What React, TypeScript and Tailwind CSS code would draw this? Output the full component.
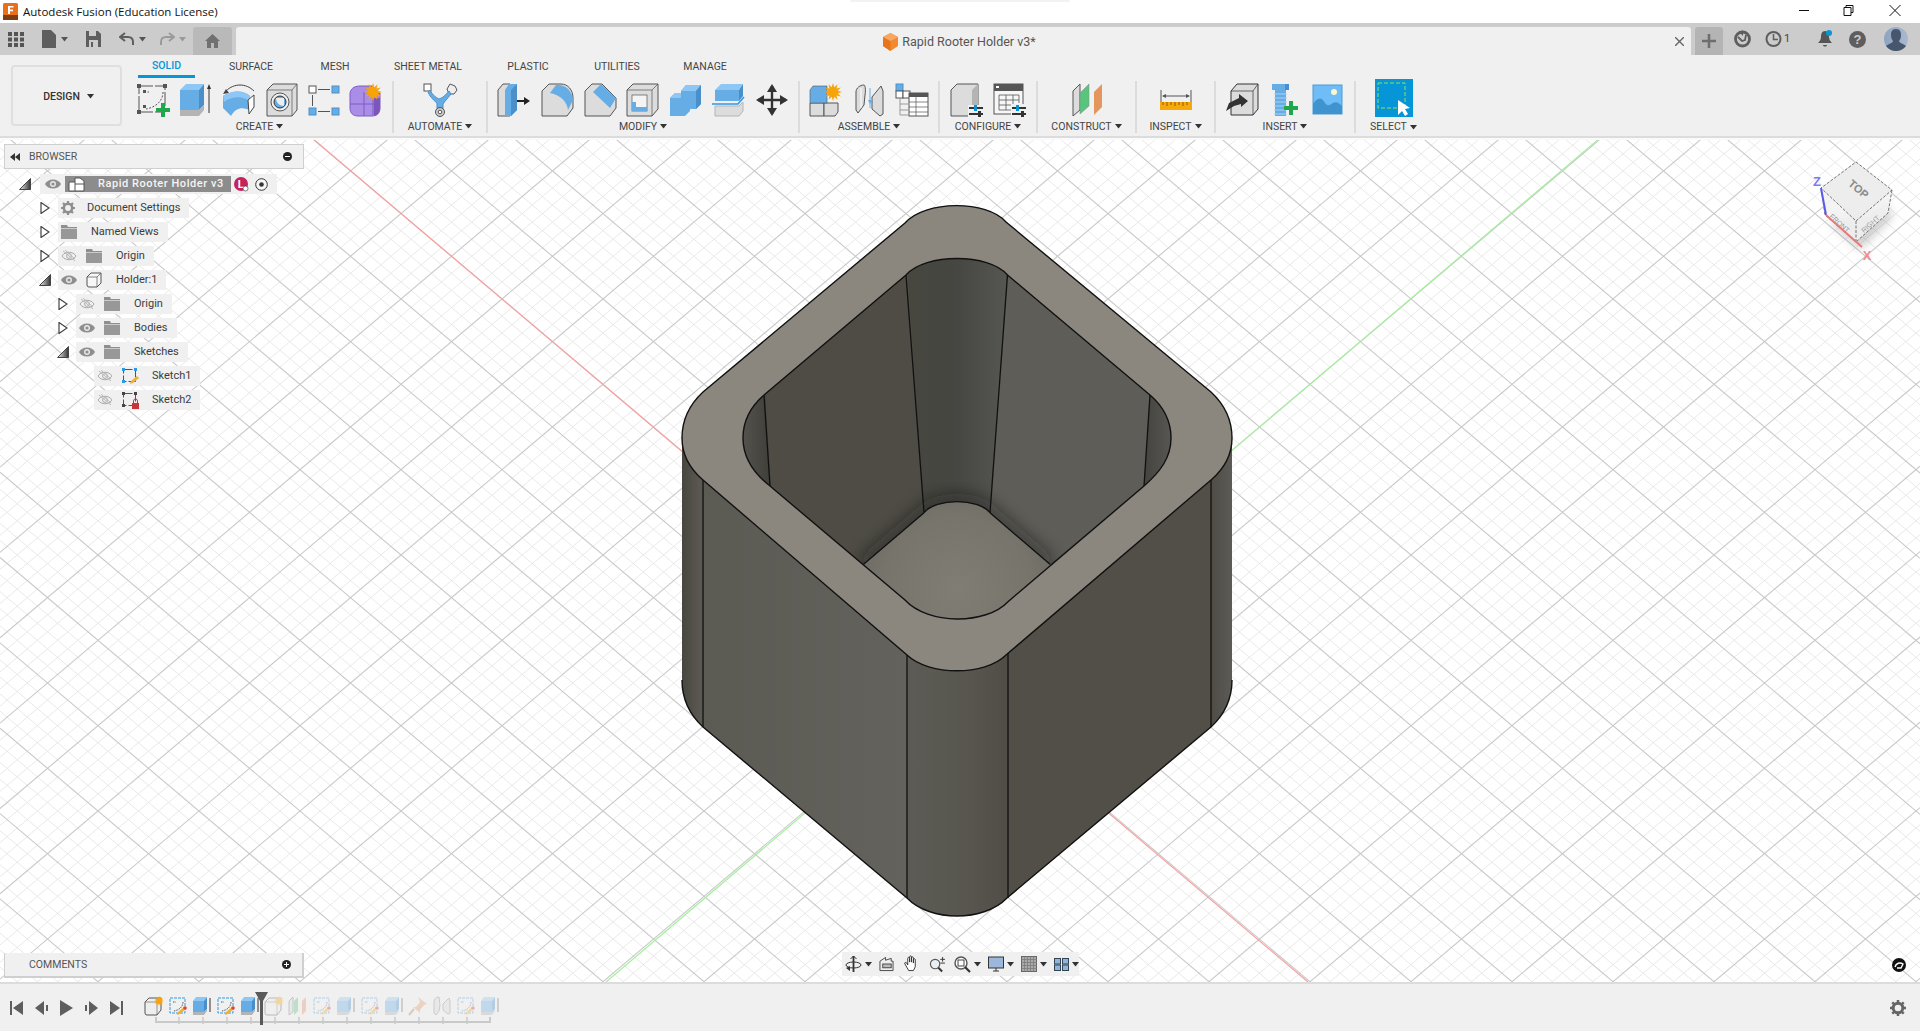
import React from "react";

const B = "#66ade6", BL = "#8ec6f5", BD = "#4a8fc9", G = "#dcdcdc", GD = "#b4b4b4", S = "#555";

const Ico = ({ children, w = 34, h = 34 }: { children: React.ReactNode; w?: number; h?: number }) => (
  <svg width={w} height={h} viewBox={`0 0 ${w} ${h}`} className="block shrink-0">{children}</svg>
);
const Caret = ({ c = "#333" }: { c?: string }) => (
  <svg width="7" height="5" viewBox="0 0 7 5" className="inline-block shrink-0"><polygon points="0,0 7,0 3.5,4.5" fill={c} /></svg>
);
const Plus = ({ x, y }: { x: number; y: number }) => (
  <path d={`M${x - 2} ${y - 7}h4v5h5v4h-5v5h-4v-5h-5v-4h5z`} fill="#1ea84b" />
);
const Star = ({ x, y, r = 7 }: { x: number; y: number; r?: number }) => {
  const pts: string[] = [];
  for (let i = 0; i < 24; i++) {
    const a = (i * Math.PI) / 12;
    const q = i % 2 === 0 ? r : r * 0.55;
    pts.push(`${(x + q * Math.cos(a)).toFixed(1)},${(y + q * Math.sin(a)).toFixed(1)}`);
  }
  return <polygon points={pts.join(" ")} fill="#f7a30a" />;
};

const toolIcons: Record<string, React.ReactNode> = {
  sketch: (
    <Ico>
      <rect x="3" y="3" width="26" height="26" fill="none" stroke={S} strokeDasharray="14 2" />
      <path d="M1 1h4v4H1zM27 1h4v4h-4zM1 27h4v4H1z" fill={S} />
      <path d="M8 9h5M27 9c0 8-6 15-17 17" fill="none" stroke={S} strokeDasharray="2 1.5" />
      <rect x="7" y="7" width="3" height="3" fill={S} /><rect x="7" y="22" width="3" height="3" fill={S} />
      <Plus x={27} y={27} />
    </Ico>
  ),
  extrude: (
    <Ico>
      <polygon points="1,7 20,7 25,1 7,1" fill={BL} />
      <polygon points="1,7 20,7 20,27 1,27" fill={B} />
      <polygon points="20,7 25,1 25,22 20,27" fill={BD} />
      <polygon points="1,27 20,27 25,22 25,27 20,33 1,33" fill={GD} />
      <path d="M30 30V4" stroke="#333" /><polygon points="30,1 32,6 28,6" fill="#333" />
    </Ico>
  ),
  revolve: (
    <Ico>
      <path d="M4 8C12 0 24 0 32 8" fill="none" stroke="#444" /><polygon points="1,11 7,10 4,6" fill="#444" />
      <path d="M1 13C10 7 22 7 28 13L27 27C21 24 14 24 9 33L1 25z" fill={B} />
      <path d="M1 13C10 7 22 7 28 13L27 18C21 13 10 13 2 19z" fill={BL} />
      <path d="M26 17l6-5v12l-5 7z" fill="#fff" stroke="#444" />
    </Ico>
  ),
  hole: (
    <Ico>
      <polygon points="2,7 8,1 32,1 32,27 27,33 2,33" fill={G} stroke={S} />
      <path d="M2 7h25v26M27 7l5-6" fill="none" stroke={S} strokeWidth=".7" />
      <circle cx="15" cy="19" r="9" fill="#eee" stroke={S} />
      <circle cx="15" cy="19" r="6" fill={B} stroke="#333" />
      <path d="M11 15h8v8c-4 0-8-3-8-8z" fill="#eee" />
    </Ico>
  ),
  pattern: (
    <Ico>
      <rect x="2" y="3" width="7" height="7" fill="#fff" stroke={S} />
      <rect x="25" y="3" width="7" height="7" fill={B} stroke={BD} />
      <rect x="2" y="25" width="7" height="7" fill={B} stroke={BD} />
      <rect x="25" y="25" width="7" height="7" fill={B} stroke={BD} />
      <path d="M11 6.5h12M5.5 12v11M11 28.5h12" stroke={S} />
    </Ico>
  ),
  form: (
    <Ico>
      <path d="M1 11C1 6 5 3 11 3h12v7h8v15c0 5-3 8-8 8H9c-5 0-8-3-8-8z" fill="#a98de6" stroke="#7f5cc4" />
      <path d="M1 21h24M15 9v24M24 12v20" stroke="#7f5cc4" fill="none" />
      <path d="M25 15h6v10c0 4-2 7-6 8z" fill="#7d56bb" />
      <Star x={24} y={9} r={9} />
    </Ico>
  ),
  automate: (
    <Ico w={36}>
      <rect x="2" y="1" width="7" height="7" fill="#fff" stroke={S} />
      <polygon points="28,1 33,3 35,7 32,11 27,11 25,6" fill="#eee" stroke={S} />
      <path d="M8 7c3 6 7 8 9 9 3-1 6-3 10-8l2 3c-4 5-6 7-8 10v6h-6v-7C11 17 7 12 6 9z" fill={B} stroke={BD} />
      <circle cx="18" cy="29" r="4.5" fill="#ccc" stroke={S} /><circle cx="18" cy="29" r="1.8" fill="#fff" stroke={S} />
    </Ico>
  ),
  press: (
    <Ico>
      <polygon points="1,7 6,1 13,1 13,33 6,33 1,33" fill={G} stroke={S} />
      <polygon points="8,7 12,1 20,1 20,27 14,33 8,33" fill={B} />
      <polygon points="14,7 20,1 20,27 14,33" fill={BD} />
      <path d="M20 18h9" stroke="#222" strokeWidth="2" /><polygon points="27,14 33,18 27,22" fill="#222" />
    </Ico>
  ),
  fillet: (
    <Ico>
      <path d="M2 8L9 1h12c7 0 12 6 12 14v10l-6 8H2z" fill={G} stroke={S} />
      <path d="M16 2c9-1 16 5 17 15l-5 10c-1-8-7-15-18-17z" fill={B} />
    </Ico>
  ),
  chamfer: (
    <Ico>
      <path d="M2 8L9 1h10L33 15v10l-6 8H2z" fill={G} stroke={S} />
      <polygon points="10,9 18,1 33,15 27,25" fill={B} />
    </Ico>
  ),
  shell: (
    <Ico>
      <polygon points="1,7 7,1 32,1 32,26 26,33 1,33" fill={G} stroke={S} />
      <path d="M1 7h25v26M26 7l6-6" fill="none" stroke={S} strokeWidth=".7" />
      <rect x="6" y="12" width="15" height="16" fill="#f4f4f4" stroke={S} strokeWidth=".7" />
      <path d="M6 28v-9h4v5h11v4z" fill={B} />
    </Ico>
  ),
  combine: (
    <Ico>
      <polygon points="12,8 17,2 32,2 32,21 27,26 12,26" fill={B} />
      <polygon points="17,2 32,2 27,8 12,8" fill={BL} />
      <polygon points="27,8 32,2 32,21 27,26" fill={BD} />
      <polygon points="1,15 6,10 21,10 21,28 16,33 1,33" fill={B} />
      <polygon points="6,10 12,10 12,15 1,15" fill={BL} />
    </Ico>
  ),
  split: (
    <Ico>
      <polygon points="3,7 9,1 31,1 27,7" fill={BL} />
      <polygon points="3,7 27,7 27,18 3,18" fill={B} />
      <polygon points="27,7 31,1 31,13 27,18" fill={BD} />
      <path d="M0 21h26l6-7" fill="none" stroke="#2f98e6" strokeWidth="1.6" />
      <polygon points="3,23 27,23 31,19 31,28 27,33 3,33" fill={G} stroke={GD} />
    </Ico>
  ),
  move: (
    <Ico>
      <path d="M17 3v28M3 17h28" stroke="#333" strokeWidth="2.4" />
      <polygon points="17,1 22,9 12,9" fill="#333" /><polygon points="17,33 22,25 12,25" fill="#333" />
      <polygon points="1,17 9,12 9,22" fill="#333" /><polygon points="33,17 25,12 25,22" fill="#333" />
    </Ico>
  ),
  comp: (
    <Ico>
      <polygon points="1,20 15,20 15,33 1,33" fill={G} stroke={S} />
      <polygon points="15,20 29,20 29,29 26,33 15,33" fill={G} stroke={S} />
      <polygon points="1,7 4,3 18,3 18,20 1,20" fill={B} stroke={S} strokeWidth=".6" />
      <Star x={24} y={9} r={9} />
    </Ico>
  ),
  joint: (
    <Ico>
      <path d="M4 9C4 5 8 2 12 2c1 0 2 4 1 10l-1 10-6 8-2-3z" fill={G} stroke={S} />
      <path d="M20 14l9-11 2 5v23l-3 2-8-7z" fill={G} stroke={S} />
      <path d="M9 5v20" stroke="#fff" /><path d="M18 5v20" stroke={B} /><polygon points="16,17 20,17 18,21" fill={B} />
    </Ico>
  ),
  tree: (
    <Ico>
      <rect x="1" y="1" width="7" height="7" fill={B} stroke={BD} />
      <rect x="1" y="8" width="7" height="7" fill="#fff" stroke={S} />
      <rect x="8" y="8" width="7" height="7" fill="#fff" stroke={S} />
      <path d="M5 15v17M5 21h8M5 27h8M5 32h8" stroke="#999" />
      <rect x="14" y="10" width="19" height="23" fill="#fff" stroke={S} />
      <rect x="14" y="10" width="19" height="4" fill={S} />
      <path d="M14 19h19M14 24h19M14 29h19M21 14v19" stroke={S} strokeWidth=".7" />
    </Ico>
  ),
  cfgBox: (
    <Ico>
      <polygon points="1,7 7,1 28,1 28,25 24,33 1,33" fill={G} stroke={S} />
      <polygon points="22,7 28,1 28,25 22,31" fill={GD} />
      <rect x="18" y="22" width="16" height="12" fill="#f0f0f0" />
      <path d="M19 25h14M19 31h14" stroke="#333" strokeWidth="2" />
      <rect x="24" y="22" width="3" height="6" fill="#0696d7" /><rect x="28" y="28" width="3" height="6" fill="#333" />
    </Ico>
  ),
  cfgTable: (
    <Ico>
      <rect x="1" y="1" width="29" height="30" fill="#f7f7f7" stroke={S} />
      <rect x="1" y="1" width="29" height="7" fill={S} /><rect x="3" y="3" width="3" height="2" fill="#fff" />
      <path d="M6 12h20M6 17h20M6 22h15M6 27h12M6 12v15M13 12v15M20 12v15M26 12v8" stroke={S} strokeWidth=".8" fill="none" />
      <rect x="18" y="21" width="16" height="13" fill="#f0f0f0" />
      <path d="M19 25h14M19 31h14" stroke="#333" strokeWidth="2" />
      <rect x="23" y="22" width="3" height="6" fill="#0696d7" /><rect x="28" y="28" width="3" height="6" fill="#333" />
    </Ico>
  ),
  construct: (
    <Ico>
      <polygon points="3,8 10,1 10,27 3,33" fill={G} stroke={S} />
      <polygon points="10,10 19,1 19,23 10,31" fill="#58c47c" stroke="#888" strokeWidth=".5" />
      <polygon points="24,9 32,1 32,24 24,32" fill="#e3975f" />
    </Ico>
  ),
  measure: (
    <Ico>
      <path d="M2 7v14M32 7v14M4 13h26" stroke={S} /><polygon points="3,13 7,11 7,15" fill={S} /><polygon points="31,13 27,11 27,15" fill={S} />
      <rect x="1" y="19" width="32" height="8" fill="#f7a80a" />
      <path d="M4 19v3M8 19v4M12 19v3M16 19v4M20 19v3M24 19v4M28 19v3" stroke="#8a5c00" />
    </Ico>
  ),
  derive: (
    <Ico>
      <polygon points="6,8 12,1 33,1 33,26 28,32 6,32" fill={G} stroke="#333" />
      <path d="M6 8h22v24M28 8l5-7" fill="none" stroke="#333" strokeWidth=".7" />
      <polygon points="14,11 23,18 16,24 16,21 9,23 1,28 4,20 14,15" fill="#333" />
    </Ico>
  ),
  bolt: (
    <Ico>
      <polygon points="4,1 21,1 21,7 4,7" fill={B} /><polygon points="17,1 21,1 21,7 17,7" fill={BD} />
      <path d="M7 7h11v26H7z" fill={B} />
      <path d="M6 11h13M6 15h13M6 19h13M6 23h13M6 27h13M6 31h13" stroke="#a8d2f3" />
      <Plus x={23} y={25} />
    </Ico>
  ),
  image: (
    <Ico>
      <rect x="2" y="2" width="29" height="29" fill="#6fbcf7" stroke="#4a9bd7" />
      <circle cx="23" cy="9" r="3" fill="#fbf8d0" />
      <path d="M2 31V21c4-6 8-8 12-1 3 4 5 2 8 0 3-2 6 0 9 3v8z" fill="#3f93cf" />
    </Ico>
  ),
};

const IconBtn = ({ n, w = "w-[43px]" }: { n: string; w?: string }) => (
  <div className={`${w} h-[34px] flex items-center justify-center`}>{toolIcons[n]}</div>
);

const Panel = ({ w, label, icons, sep = true }: { w: string; label: string; icons: React.ReactNode; sep?: boolean }) => (
  <div className={`${w} h-[52px] flex flex-col items-center ${sep ? "border-r-2 border-[#dcdcdc]" : ""}`}>
    <div className="h-[38px] flex justify-center items-start pt-[2px]">{icons}</div>
    <div className="h-[17px] pt-[2px] flex items-center gap-[3px] text-[10.5px] text-[#444]">{label}<Caret /></div>
  </div>
);

const tabs: [string, string, string][] = [
  ["SOLID", "w-[57px]", "text-[#0696d7] font-medium border-b-[3px] border-[#0696d7]"],
  ["SURFACE", "w-[112px]", ""],
  ["MESH", "w-[56px]", ""],
  ["SHEET METAL", "w-[130px]", ""],
  ["PLASTIC", "w-[70px]", ""],
  ["UTILITIES", "w-[108px]", ""],
  ["MANAGE", "w-[68px]", ""],
];

const Eye = ({ off }: { off?: boolean }) =>
  off ? (
    <svg width="16" height="12" viewBox="0 0 16 12" className="shrink-0">
      <path d="M1 6c3-5 11-5 14 0-3 5-11 5-14 0z" fill="none" stroke="#aaa" />
      <circle cx="8" cy="6" r="2.4" fill="none" stroke="#aaa" />
      <path d="M2 1l12 10M4 0l10 9" stroke="#bbb" />
    </svg>
  ) : (
    <svg width="16" height="12" viewBox="0 0 16 12" className="shrink-0">
      <path d="M0 6c3-6 13-6 16 0-3 6-13 6-16 0z" fill="#8e8e8e" />
      <circle cx="8" cy="6" r="3" fill="#e8e8e8" /><circle cx="8" cy="6" r="1.6" fill="#8e8e8e" />
    </svg>
  );
const Folder = () => (
  <svg width="16" height="14" viewBox="0 0 16 14" className="shrink-0">
    <path d="M0 0h6l1 2h9v2H0z" fill="#8e8e8e" /><rect x="0" y="3" width="16" height="11" fill="#989898" />
    <path d="M0 3.5h16" stroke="#eee" strokeWidth=".6" />
  </svg>
);
const Gear = ({ c = "#8e8e8e", s = 14 }: { c?: string; s?: number }) => (
  <svg width={s} height={s} viewBox="0 0 14 14" className="shrink-0">
    <circle cx="7" cy="7" r="4.2" fill="none" stroke={c} strokeWidth="2.6" />
    <path d="M7 0v3M7 11v3M0 7h3M11 7h3M2 2l2 2M10 10l2 2M12 2l-2 2M4 10l-2 2" stroke={c} strokeWidth="2.2" />
  </svg>
);
const CubeOutline = () => (
  <svg width="16" height="16" viewBox="0 0 16 16" className="shrink-0">
    <path d="M1 5l4-4h10v10l-4 4H3a2 2 0 0 1-2-2z" fill="#f7f7f7" stroke="#555" />
    <path d="M1 5h10v10M11 5l4-4" fill="none" stroke="#555" strokeWidth=".7" />
  </svg>
);
const SketchIco = ({ lock }: { lock?: boolean }) => (
  <svg width="17" height="17" viewBox="0 0 17 17" className="shrink-0">
    <rect x="1.5" y="1.5" width="12" height="12" fill="none" stroke="#555" strokeDasharray="9 2" />
    <path d="M0 0h3v3H0zM12 0h3v3h-3zM0 12h3v3H0z" fill={lock ? "#444" : "#2f98e6"} />
    {lock ? (
      <g><rect x="10" y="11" width="7" height="6" fill="#c9343c" /><path d="M11.5 11V9a2 2 0 0 1 4 0v2" fill="none" stroke="#c9343c" /></g>
    ) : (
      <path d="M8 16l1-3 6-5 2 2-6 5z" fill="#eeb03c" />
    )}
  </svg>
);
const Tri = ({ open }: { open?: boolean }) =>
  open ? (
    <svg width="12" height="12" viewBox="0 0 12 12"><polygon points="0.5,11.5 11.5,0.5 11.5,11.5" fill="url(#tg)" stroke="#444" /></svg>
  ) : (
    <svg width="10" height="12" viewBox="0 0 10 12"><polygon points="1,0.5 9,6 1,11.5" fill="#fff" stroke="#444" strokeWidth="1.2" /></svg>
  );

type RowP = { d: number; open?: boolean; noTri?: boolean; eye?: "on" | "off"; icon: React.ReactNode; label: string; iconW?: string; gap?: string };
const Row = ({ d, open, noTri, eye, icon, label, iconW = "w-[28px]", gap = "ml-[8px]" }: RowP) => (
  <div className="h-[24px] flex items-center" style={{ paddingLeft: 40 + 18 * d }}>
    <div className="w-[18px] -ml-[22px] mr-[4px] flex justify-center">{noTri ? null : <Tri open={open} />}</div>
    <div className="h-[20px] bg-[#f0f0f0] flex items-center pr-[9px]">
      {eye && <div className="w-[22px] flex justify-center"><Eye off={eye === "off"} /></div>}
      <div className={`${iconW} flex justify-center`}>{icon}</div>
      <span className={`${gap} pt-px text-[11px] text-[#3c3c3c] whitespace-nowrap`}>{label}</span>
    </div>
  </div>
);

const T = ({ n }: { n: string }) => <div className="w-[24px] flex justify-center">{tl[n]}</div>;
const tlBox = (
  <svg width="20" height="20" viewBox="0 0 20 20"><path d="M1 6l4-4h12v12l-4 5H3a2 2 0 0 1-2-2z" fill="#eee" stroke="#555" /><path d="M1 6h12v13" fill="none" stroke="#555" strokeWidth=".6" /><Star x={15} y={5} r={5} /></svg>
);
const tlSk = (
  <svg width="20" height="20" viewBox="0 0 20 20"><rect x="2" y="2" width="15" height="15" fill="none" stroke="#2f98e6" strokeDasharray="3 1" /><path d="M5 6h3M15 6c0 5-4 8-9 9" fill="none" stroke="#555" strokeDasharray="1.5 1" /><path d="M9 19l1-3 6-5 2 2-6 5z" fill="#eeb03c" /><circle cx="17" cy="12" r="1.8" fill="#d43" /></svg>
);
const tlEx = (
  <svg width="20" height="20" viewBox="0 0 20 20"><polygon points="1,5 4,1 15,1 12,5" fill={BL} /><rect x="1" y="5" width="11" height="11" fill={B} /><polygon points="12,5 15,1 15,13 12,16" fill={BD} /><polygon points="1,16 12,16 15,13 15,15 12,19 1,19" fill={GD} /><path d="M18 16V2" stroke="#333" /></svg>
);
const tlPlane = (
  <svg width="20" height="20" viewBox="0 0 20 20"><polygon points="1,5 5,1 5,16 1,19" fill={G} stroke="#777" /><polygon points="6,5 10,1 10,15 6,19" fill="#58c47c" /><polygon points="14,5 18,1 18,15 14,19" fill="#e3975f" /></svg>
);
const tlPin = (
  <svg width="20" height="20" viewBox="0 0 20 20"><path d="M10 1l9 7-3 1-4 5 0 3-7-6 3 0 4-5z" fill="#e0a070" /><path d="M6 13l-5 6" stroke="#c08050" strokeWidth="2" /></svg>
);
const tlJoint = (
  <svg width="20" height="20" viewBox="0 0 20 20"><path d="M2 6c0-3 2-5 5-5l1 8-1 6-3 4-2-2z" fill={G} stroke="#888" /><path d="M11 8l6-6 1 3v12l-2 1-5-4z" fill={G} stroke="#888" /></svg>
);
const tl: Record<string, React.ReactNode> = { box: tlBox, sk: tlSk, ex: tlEx, plane: tlPlane, pin: tlPin, joint: tlJoint };
const Faded = ({ children }: { children: React.ReactNode }) => <div className="opacity-35 flex">{children}</div>;

const slope = 0.845, ox = 956.5, oy = 683, minor = 101 * slope / 5;

const Grid = () => {
  const minorLines: React.ReactNode[] = [];
  const majorLines: React.ReactNode[] = [];
  for (let k = -80; k <= 65; k++) {
    const major = k % 5 === 0;
    const c = oy + k * minor;
    const list = major ? majorLines : minorLines;
    const stroke = major ? "#c9c9c9" : "#e7e7e7";
    list.push(<line key={"a" + k} x1={0} y1={c - slope * ox} x2={1920} y2={c + slope * (1920 - ox)} stroke={stroke} strokeWidth={major ? 1.1 : 0.9} />);
    list.push(<line key={"b" + k} x1={0} y1={c + slope * ox} x2={1920} y2={c - slope * (1920 - ox)} stroke={stroke} strokeWidth={major ? 1.1 : 0.9} />);
  }
  return <g>{minorLines}{majorLines}</g>;
};

const outerTop = "M905 223C925 200 987 200 1006 222L1211 392C1225 405 1232 420 1232 438C1232 455 1225 468 1211 480L1006 655C985 676 929 676 907 655L703 480C689 468 682 455 682 438C682 420 689 405 703 392Z";
const inner = "M906 275C925 253 989 253 1007.5 275L1150 395C1164 407 1171 422 1171 438C1171 458 1160 472 1144 486L1008 601.7C986 625 928 625 905 600L770 486C752 472 743 456 743 438C743 420 750 407 764 395Z";
const sil = "M682 438V680C682 700 690 715 703 727L907 898C930 922 984 922 1007 898L1211 727C1224 715 1232 700 1232 680V438Z";
const silEdge = "M682 680C682 700 690 715 703 727L907 898C930 922 984 922 1007 898L1211 727C1224 715 1232 700 1232 680";

const Model = () => (
  <g>
    <defs>
      <clipPath id="silc"><path d={sil} /></clipPath>
      <clipPath id="innc"><path d={inner} /></clipPath>
      <linearGradient id="tg" x1="0" x2="1" y1="0" y2="0"><stop offset="0" stopColor="#eee" /><stop offset="1" stopColor="#333" /></linearGradient>
      <linearGradient id="cl" x1="0" x2="1"><stop offset="0" stopColor="#47463f" /><stop offset="1" stopColor="#5d5b54" /></linearGradient>
      <linearGradient id="cr" x1="0" x2="1"><stop offset="0" stopColor="#4f4c45" /><stop offset="1" stopColor="#5c5b56" /></linearGradient>
      <linearGradient id="cf" x1="0" x2="1"><stop offset="0" stopColor="#5c5b55" /><stop offset=".6" stopColor="#58564f" /><stop offset="1" stopColor="#504d46" /></linearGradient>
      <linearGradient id="lw" x1="0" x2="1"><stop offset="0" stopColor="#5b5a53" /><stop offset="1" stopColor="#63625c" /></linearGradient>
      <linearGradient id="bc" x1="0" x2="1"><stop offset="0" stopColor="#47463f" /><stop offset=".5" stopColor="#464642" /><stop offset="1" stopColor="#565752" /></linearGradient>
      <linearGradient id="icl" x1="0" x2="1"><stop offset="0" stopColor="#55544f" /><stop offset="1" stopColor="#3f3e39" /></linearGradient>
      <linearGradient id="icr" x1="0" x2="1"><stop offset="0" stopColor="#44433e" /><stop offset="1" stopColor="#5a5955" /></linearGradient>
      <radialGradient id="fl" gradientUnits="userSpaceOnUse" cx="957" cy="590" r="125"><stop offset="0" stopColor="#807d75" /><stop offset=".6" stopColor="#77746c" /><stop offset="1" stopColor="#65635c" /></radialGradient>
      <filter id="bl" x="-30%" y="-30%" width="160%" height="160%"><feGaussianBlur stdDeviation="8" /></filter>
    </defs>
    <g clipPath="url(#silc)">
      <rect x="682" y="430" width="21" height="320" fill="url(#cl)" />
      <rect x="703" y="430" width="204" height="490" fill="url(#lw)" />
      <rect x="907" y="430" width="101" height="490" fill="url(#cf)" />
      <rect x="1008" y="430" width="203" height="490" fill="#524f48" />
      <rect x="1211" y="430" width="21" height="320" fill="url(#cr)" />
    </g>
    <path d={silEdge} fill="none" stroke="#111" strokeWidth="1.4" />
    <path d="M703 480V727M907 640V898M1008 640V898M1211 480V727" stroke="#111" strokeWidth="1.3" />
    <path d={outerTop} fill="#8b877f" stroke="#111" strokeWidth="1.4" />
    <path d={inner} fill="#4f4d46" />
    <g clipPath="url(#innc)">
      <polygon points="764,395 906,275 924,512.7 863.6,564.3 770,486" fill="#4e4c45" />
      <polygon points="1007.5,275 1150,395 1144,486 1050,564.3 990,512.7" fill="#5e5d57" />
      <polygon points="906,250 1008,250 990,520 924,520" fill="url(#bc)" />
      <polygon points="740,390 765,390 771,490 740,490" fill="url(#icl)" />
      <polygon points="1150,390 1175,390 1175,490 1144,490" fill="url(#icr)" />
      <path d="M863.6 564.3L924 512.7C936 498 978 498 990 512.7L1050 564.3" fill="none" stroke="#111" strokeOpacity=".45" strokeWidth="16" filter="url(#bl)" />
      <path d="M924 512.7C936 498 978 498 990 512.7L1050 564.3L1050 640H864L863.6 564.3Z" fill="url(#fl)" />
    </g>
    <path d="M906 275L924 512.7M1007.5 275L990 512.7M764 395L770 486M1150 395L1144 486M863.6 564.3L924 512.7C936 498 978 498 990 512.7L1050 564.3" fill="none" stroke="#111" strokeWidth="1.3" />
    <path d={inner} fill="none" stroke="#111" strokeWidth="1.4" />
  </g>
);

const NavItem = ({ children, caret }: { children: React.ReactNode; caret?: boolean }) => (
  <div className="flex items-center gap-[3px]">{children}{caret && <Caret c="#333" />}</div>
);

export default function App() {
  return (
    <div className="w-[1920px] h-[1031px] flex flex-col overflow-hidden bg-white [font-family:Roboto,sans-serif]">
      {/* title bar */}
      <div className="h-[23px] bg-white flex items-center relative shrink-0">
        <svg width="15" height="17" viewBox="0 0 15 17" className="ml-[3px]">
          <rect width="15" height="17" rx="1.5" fill="#e8701a" /><rect y="12" width="15" height="5" fill="#7d3d10" />
          <path d="M5 3h5.5v1.6H7v2h3v1.6H7V11H5z" fill="#fff" />
        </svg>
        <span className="ml-[5px] text-[11.5px] text-[#111] [font-family:'Open_Sans',sans-serif]">Autodesk Fusion (Education License)</span>
        <div className="flex-1" />
        <svg width="105" height="23" viewBox="0 0 105 23" className="mr-[16px]">
          <path d="M0 10.5h10" stroke="#111" />
          <path d="M45 7.5h7v8h-7zM47 7.5v-2h7v7h-2" fill="none" stroke="#111" />
          <path d="M90.500 5l11 11M101.500 5l-11 11" stroke="#111" />
        </svg>
        <div className="absolute left-[850px] top-0 w-[220px] h-[2px] bg-[#f2f2f2] rounded-b" />
      </div>

      {/* tab bar */}
      <div className="h-[32px] bg-[#cccccc] flex items-end shrink-0">
        <div className="h-[32px] w-[193px] flex items-center relative shrink-0">
          <svg width="16" height="16" viewBox="0 0 16 16" className="ml-[8px]">
            <path d="M0 1h4v4H0zM6 1h4v4H6zM12 1h4v4h-4zM0 6.500h4v4H0zM6 6.500h4v4H6zM12 6.500h4v4h-4zM0 12h4v4H0zM6 12h4v4H6zM12 12h4v4h-4z" fill="#555" />
          </svg>
          <svg width="14" height="18" viewBox="0 0 14 18" className="ml-[18px]"><path d="M0 0h9l5 5v13H0z" fill="#5e5e5e" /></svg>
          <span className="ml-[5px]"><Caret c="#555" /></span>
          <svg width="15" height="16" viewBox="0 0 15 16" className="ml-[18px]"><path d="M0 0h12l3 3v13H0z" fill="#5e5e5e" /><rect x="3" y="0" width="7" height="5" fill="#ccc" /><rect x="3" y="9" width="9" height="7" fill="#ccc" /><rect x="5" y="11" width="2" height="5" fill="#5e5e5e" /></svg>
          <svg width="16" height="14" viewBox="0 0 16 14" className="ml-[18px]"><path d="M6 1L1 5l5 4M1 5h8c3 0 5 2 5 5v3" fill="none" stroke="#5e5e5e" strokeWidth="2" /></svg>
          <span className="ml-[4px]"><Caret c="#555" /></span>
          <svg width="16" height="14" viewBox="0 0 16 14" className="ml-[13px]"><path d="M10 1l5 4-5 4M15 5H7C4 5 2 7 2 10v3" fill="none" stroke="#9a9a9a" strokeWidth="2" /></svg>
          <span className="ml-[4px]"><Caret c="#999" /></span>
        </div>
        <div className="w-[39px] h-[28px] bg-[#b9b9b9] rounded-t-[3px] flex items-center justify-center shrink-0">
          <svg width="15" height="14" viewBox="0 0 15 14"><path d="M7.500 0L15 7h-2v7H9V9H6v5H2V7H0z" fill="#707070" /></svg>
        </div>
        <div className="ml-[4px] flex-1 h-[28px] bg-[#f0f0f0] rounded-t-[3px] flex items-center relative">
          <div className="flex-1 flex items-center justify-center gap-[4px] pl-[8px] pt-[2px]">
            <svg width="15" height="18" viewBox="0 0 15 18"><polygon points="7.500,0 15,4 15,13 7.500,18 0,13 0,4" fill="#f28a30" /><polygon points="0,4 7.500,8 7.500,18 0,13" fill="#e8751a" /><polygon points="7.500,0 15,4 7.500,8 0,4" fill="#f7a860" /></svg>
            <span className="text-[12.5px] text-[#555]">Rapid Rooter Holder v3*</span>
          </div>
          <svg width="9" height="9" viewBox="0 0 9 9" className="mr-[7px]"><path d="M0 0l9 9M9 0L0 9" stroke="#666" strokeWidth="1.4" /></svg>
        </div>
        <div className="ml-[4px] w-[28px] h-[28px] bg-[#b4b4b4] rounded-t-[3px] flex items-center justify-center shrink-0">
          <svg width="14" height="14" viewBox="0 0 14 14"><path d="M7 0v14M0 7h14" stroke="#6e6e6e" strokeWidth="2.6" /></svg>
        </div>
        <div className="w-[197px] h-[32px] flex items-center shrink-0 relative">
          <svg width="17" height="18" viewBox="0 0 17 18" className="ml-[11px]"><circle cx="8.500" cy="9" r="7" fill="none" stroke="#5e5e5e" strokeWidth="2.800" /><path d="M9 0l-3 3 3 3z" fill="#5e5e5e" /><path d="M4 7l4 4 3-1 1-5" fill="none" stroke="#5e5e5e" strokeWidth="1.800" /></svg>
          <svg width="17" height="18" viewBox="0 0 17 18" className="ml-[14px]"><circle cx="8.500" cy="9" r="8" fill="#5e5e5e" /><circle cx="8.500" cy="9" r="6" fill="#ccc" /><path d="M8.500 4v5.500H13" fill="none" stroke="#5e5e5e" strokeWidth="1.500" /></svg>
          <span className="ml-[2px] text-[11px] text-[#444]">1</span>
          <svg width="16" height="18" viewBox="0 0 16 18" className="ml-[27px]"><path d="M8 1c3 0 4 3 4 6s2 5 3 6H1c1-1 3-3 3-6s1-6 4-6zM6 15h4c0 2-4 2-4 0z" fill="#555" /><circle cx="12" cy="3" r="3" fill="#0696d7" /></svg>
          <svg width="17" height="17" viewBox="0 0 17 17" className="ml-[16px]"><circle cx="8.500" cy="8.500" r="8.500" fill="#5e5e5e" /><text x="8.500" y="13" textAnchor="middle" fontSize="13" fontWeight="700" fill="#ccc" fontFamily="Liberation Sans">?</text></svg>
          <svg width="24" height="24" viewBox="0 0 24 24" className="ml-[18px]"><defs><linearGradient id="av" x1="0" x2="1"><stop offset="0" stopColor="#8ea3bf" /><stop offset="1" stopColor="#a9b9cf" /></linearGradient></defs><circle cx="12" cy="12" r="12" fill="url(#av)" /><path d="M12 2c4 0 5 3 5 6s-1 5-2 6c0 2 5 3 7 5-3 4-7 5-10 5s-7-1-10-5c2-2 7-3 7-5-1-1-2-3-2-6s1-6 5-6z" fill="#47566c" /></svg>
        </div>
      </div>

      {/* toolbar */}
      <div className="h-[83px] bg-[#f0f0f0] border-b-2 border-[#dcdcdc] flex shrink-0">
        <div className="ml-[11px] mt-[10px] w-[111px] h-[61px] border-2 border-[#dfdfdf] rounded-[4px] flex items-center justify-center gap-[7px] pl-[4px] pt-[2px] text-[10.5px] font-medium text-[#333] shrink-0">
          DESIGN <Caret />
        </div>
        <div className="ml-[5px] flex flex-col">
          <div className="h-[26px] flex ml-[11px] pt-[1px]">
            {tabs.map(([t, w, c]) => (
              <div key={t} className={`${w} h-[22px] flex items-center justify-center text-[10.5px] text-[#444] ${c}`}>{t}</div>
            ))}
          </div>
          <div className="flex">
            <Panel w="w-[267px]" label="CREATE" icons={<>
              <IconBtn n="sketch" /><IconBtn n="extrude" /><IconBtn n="revolve" /><IconBtn n="hole" /><IconBtn n="pattern" w="w-[41px]" /><IconBtn n="form" />
            </>} />
            <Panel w="w-[94px]" label="AUTOMATE" icons={<IconBtn n="automate" />} />
            <Panel w="w-[312px]" label="MODIFY" icons={<>
              <IconBtn n="press" /><IconBtn n="fillet" /><IconBtn n="chamfer" /><IconBtn n="shell" /><IconBtn n="combine" /><IconBtn n="split" /><IconBtn n="move" />
            </>} />
            <Panel w="w-[140px]" label="ASSEMBLE" icons={<><IconBtn n="comp" /><IconBtn n="joint" /><IconBtn n="tree" /></>} />
            <Panel w="w-[98px]" label="CONFIGURE" icons={<><IconBtn n="cfgBox" /><IconBtn n="cfgTable" /></>} />
            <Panel w="w-[99px]" label="CONSTRUCT" icons={<IconBtn n="construct" />} />
            <Panel w="w-[79px]" label="INSPECT" icons={<IconBtn n="measure" />} />
            <Panel w="w-[140px]" label="INSERT" icons={<><IconBtn n="derive" /><IconBtn n="bolt" /><IconBtn n="image" /></>} />
            <div className="w-[75px] h-[52px] flex flex-col items-center -mt-[2px]">
              <div className="w-[38px] h-[39px] bg-[#0696d7] flex items-center justify-center">
                <svg width="38" height="38" viewBox="0 0 38 38">
                  <rect x="3" y="4" width="27" height="25" fill="none" stroke="#8fe05a" strokeDasharray="4 2" />
                  <polygon points="23,21 23,36 27,32 30,37 33,35 30,30 35,29" fill="#fff" />
                </svg>
              </div>
              <div className="h-[17px] pt-[3px] flex items-center gap-[3px] text-[10.5px] text-[#444]">SELECT<Caret /></div>
            </div>
          </div>
        </div>
      </div>
      <div className="h-[2px] bg-[#fafafa] shrink-0" />

      {/* viewport */}
      <div className="flex-1 relative overflow-hidden bg-white">
        <svg width="1920" height="842" viewBox="0 140 1920 842" className="absolute inset-0 block">
          <Grid />
          <line x1="312" y1="138" x2="1308" y2="982" stroke="#f8a0a0" strokeWidth="1.2" />
          <line x1="1600" y1="138" x2="606" y2="982" stroke="#a4f09c" strokeWidth="1.2" />
          <Model />
          {/* view cube */}
          <defs><filter id="cs" x="-30%" y="-30%" width="160%" height="160%"><feGaussianBlur stdDeviation="5" /></filter></defs>
          <polygon points="1830,222 1860,250 1892,218 1888,205" fill="#777" opacity=".35" filter="url(#cs)" />
          <polygon points="1856,162 1892,190 1888,213 1856,242 1825,215 1821,188" fill="#f2f2f2" fillOpacity=".85" />
          <polygon points="1856,162 1892,190 1856,221 1821,188" fill="#ebebeb" fillOpacity=".8" />
          <path d="M1856 162L1892 190L1856 221L1821 188ZM1892 190L1888 213L1856 242L1825 215L1821 188M1856 221V242" fill="none" stroke="#666" strokeWidth=".9" strokeDasharray="3 1.500" />
          <text x="1856" y="192" textAnchor="middle" fontSize="11" fill="#8a8a8a" fontWeight="700" fontFamily="Liberation Sans" transform="rotate(40 1856 192)">TOP</text>
          <text x="1838" y="225" textAnchor="middle" fontSize="7" fill="#999" fontFamily="Liberation Sans" transform="rotate(42 1838 225)">FRONT</text>
          <text x="1872" y="226" textAnchor="middle" fontSize="7" fill="#999" fontFamily="Liberation Sans" transform="rotate(-42 1872 226)">RIGHT</text>
          <line x1="1826" y1="215" x2="1821" y2="188" stroke="#5a5ae8" strokeWidth="2" />
          <line x1="1826" y1="215" x2="1862" y2="247" stroke="#e87a7a" strokeWidth="2" />
          <text x="1817" y="186" textAnchor="middle" fontSize="13" fill="#7c7cf4" fontFamily="Liberation Sans" fontWeight="700">Z</text>
          <text x="1867" y="260" textAnchor="middle" fontSize="13" fill="#f48a8a" fontFamily="Liberation Sans" fontWeight="700">X</text>
        </svg>

        {/* browser */}
        <div className="absolute left-0 top-0 w-[310px]">
          <div className="ml-[4px] mt-[4px] w-[300px] h-[25px] bg-[#f0f0f0] border border-[#cfcfcf] flex items-center text-[10.5px] text-[#555]">
            <svg width="10" height="8" viewBox="0 0 10 8" className="ml-[5px]"><path d="M5 0v8L0 4zM10 0v8L5 4z" fill="#333" /></svg>
            <span className="ml-[9px] pt-px">BROWSER</span>
            <div className="flex-1" />
            <svg width="9" height="9" viewBox="0 0 9 9" className="mr-[11px]"><circle cx="4.500" cy="4.500" r="4.500" fill="#222" /><path d="M2 4.500h5" stroke="#fff" /></svg>
          </div>
          <div className="mt-[3px]">
            <div className="h-[24px] flex items-center pl-[40px]">
              <div className="w-[18px] -ml-[24px] mr-[6px] flex justify-center"><Tri open /></div>
              <div className="h-[20px] bg-[#f0f0f0] flex items-center w-[237px]">
                <div className="w-[25px] flex justify-center"><Eye /></div>
                <div className="w-[166px] h-[16px] bg-[#8c8c8c] flex items-center">
                  <svg width="17" height="15" viewBox="0 0 17 15" className="ml-[3px]"><path d="M1 5h6V1h5l4 3v10H1z" fill="#fff" stroke="#555" /><path d="M7 5v9M7 7h9" stroke="#555" /></svg>
                  <span className="ml-[13px] pt-px text-[11px] tracking-[0.55px] font-medium text-[#f4f4f4] whitespace-nowrap">Rapid Rooter Holder v3</span>
                </div>
                <svg width="16" height="16" viewBox="0 0 16 16" className="ml-[2px]"><circle cx="8" cy="8" r="7" fill="#c4235c" /><text x="8" y="12" textAnchor="middle" fontSize="11" fontWeight="700" fill="#fff" fontFamily="Liberation Sans">L</text><circle cx="12.500" cy="12.500" r="2.500" fill="#fff" stroke="#333" strokeWidth=".6" /></svg>
                <svg width="13" height="13" viewBox="0 0 13 13" className="ml-[6px]"><circle cx="6.500" cy="6.500" r="5.800" fill="#f6f6f6" stroke="#333" /><circle cx="6.500" cy="6.500" r="2.300" fill="#333" /></svg>
              </div>
            </div>
            <Row d={1} icon={<Gear />} label="Document Settings" iconW="w-[20px]" gap="ml-[9px]" />
            <Row d={1} icon={<Folder />} label="Named Views" iconW="w-[22px]" gap="ml-[11px]" />
            <Row d={1} eye="off" icon={<Folder />} label="Origin" />
            <Row d={1} open eye="on" icon={<CubeOutline />} label="Holder:1" />
            <Row d={2} eye="off" icon={<Folder />} label="Origin" />
            <Row d={2} eye="on" icon={<Folder />} label="Bodies" />
            <Row d={2} open eye="on" icon={<Folder />} label="Sketches" />
            <Row d={3} noTri eye="off" icon={<SketchIco />} label="Sketch1" />
            <Row d={3} noTri eye="off" icon={<SketchIco lock />} label="Sketch2" />
          </div>
        </div>

        {/* comments */}
        <div className="absolute left-[4px] bottom-[4px] w-[300px] h-[25px] bg-[#f0f0f0] border-b-2 border-r-2 border-l border-[#cfcfcf] flex items-center text-[10.5px] text-[#555]">
          <span className="ml-[24px] pt-px">COMMENTS</span>
          <div className="flex-1" />
          <svg width="9" height="9" viewBox="0 0 9 9" className="mr-[11px]"><circle cx="4.500" cy="4.500" r="4.500" fill="#222" /><path d="M2 4.500h5M4.500 2v5" stroke="#fff" /></svg>
        </div>

        {/* nav bar */}
        <div className="absolute left-[842px] bottom-[6px] w-[237px] h-[24px] bg-[#f0f0f0] flex items-center pl-[3px] gap-[7px]">
          <NavItem caret>
            <svg width="17" height="18" viewBox="0 0 17 18"><path d="M8.500 1v16" stroke="#333" strokeWidth="1.800" /><path d="M5.500 4l3-3 3 3" fill="none" stroke="#333" /><ellipse cx="8.500" cy="10" rx="7.500" ry="3" fill="none" stroke="#333" /><polygon points="1,13 5,11 5,16" fill="#333" /></svg>
          </NavItem>
          <svg width="16" height="16" viewBox="0 0 16 16"><path d="M1 5l6-4v3l6-2v3h2v10H1z" fill="#eee" stroke="#444" /><rect x="4" y="8" width="9" height="4" fill="#bbb" stroke="#444" /></svg>
          <svg width="16" height="18" viewBox="0 0 16 18" className="ml-[3px]"><path d="M5 16L1 9c-1-2 1-2 2-1l1 2V3c0-1.500 2-1.500 2 0v4V1.500c0-1.500 2-1.500 2 0V7V2.500c0-1.500 2-1.500 2 0V8V4.500c0-1.500 2-1.500 2 0V12l-2 4z" fill="#fff" stroke="#333" /></svg>
          <svg width="17" height="17" viewBox="0 0 17 17" className="ml-[3px]"><circle cx="6.500" cy="8" r="5" fill="#e8f0f6" stroke="#555" strokeWidth="1.200" /><path d="M10 12l4 4" stroke="#333" strokeWidth="2" /><path d="M12 3h5M14.500 .5v5M12 7h5" stroke="#333" /></svg>
          <NavItem caret>
            <svg width="17" height="17" viewBox="0 0 17 17" className="ml-[2px]"><circle cx="7" cy="7" r="6" fill="#fff" stroke="#555" strokeWidth="1.400" /><rect x="4" y="4" width="6" height="6" fill="none" stroke="#444" /><path d="M11 11l5 5" stroke="#333" strokeWidth="2.200" /></svg>
          </NavItem>
          <NavItem caret>
            <svg width="16" height="16" viewBox="0 0 16 16"><rect x="0.500" y="1" width="15" height="11" fill="#9bb8dc" stroke="#333" /><path d="M5 15h6M8 12v3" stroke="#333" /></svg>
          </NavItem>
          <NavItem caret>
            <svg width="16" height="16" viewBox="0 0 16 16"><rect x="0.500" y=".5" width="15" height="15" fill="#aaa" stroke="#666" /><path d="M3.500 0v16M6.500 0v16M9.500 0v16M12.500 0v16M0 3.500h16M0 6.500h16M0 9.500h16M0 12.500h16" stroke="#777" strokeWidth=".7" /></svg>
          </NavItem>
          <NavItem caret>
            <svg width="15" height="13" viewBox="0 0 15 13"><rect x=".5" y=".5" width="6" height="5.500" fill="#8fb4de" stroke="#345" /><rect x="8.500" y=".5" width="6" height="5.500" fill="#8fb4de" stroke="#345" /><rect x=".5" y="7" width="6" height="5.500" fill="#8fb4de" stroke="#345" /><rect x="8.500" y="7" width="6" height="5.500" fill="#8fb4de" stroke="#345" /></svg>
          </NavItem>
        </div>

        <svg width="14" height="14" viewBox="0 0 14 14" className="absolute left-[1892px] bottom-[10px]"><circle cx="7" cy="7" r="7" fill="#111" /><path d="M3 9c1-4 5-5 8-3l-2 4H5" fill="none" stroke="#fff" strokeWidth="1.400" /></svg>
      </div>

      {/* timeline */}
      <div className="h-[49px] bg-[#f0f0f0] border-t-2 border-[#dcdcdc] flex items-center relative shrink-0">
        <div className="w-[142px] flex items-center pl-[10px] gap-[12px] shrink-0">
          <svg width="13" height="14" viewBox="0 0 13 14"><path d="M0 0h2v14H0zM13 0v14L3 7z" fill="#5e5e5e" /></svg>
          <svg width="13" height="14" viewBox="0 0 13 14"><path d="M9 0v14L0 7zM11 4h2v6h-2z" fill="#5e5e5e" /></svg>
          <svg width="13" height="16" viewBox="0 0 13 16"><path d="M0 0l13 8-13 8z" fill="#5e5e5e" /></svg>
          <svg width="13" height="14" viewBox="0 0 13 14"><path d="M4 0v14l9-7zM0 4h2v6H0z" fill="#5e5e5e" /></svg>
          <svg width="13" height="14" viewBox="0 0 13 14"><path d="M0 0v14l10-7zM11 0h2v14h-2z" fill="#5e5e5e" /></svg>
        </div>
        <div className="relative h-[40px] flex items-start pt-[8px]">
          <T n="box" /><T n="sk" /><T n="ex" /><T n="sk" /><T n="ex" />
          <Faded><T n="box" /><T n="plane" /><T n="sk" /><T n="ex" /><T n="sk" /><T n="ex" /><T n="pin" /><T n="joint" /><T n="sk" /><T n="ex" /></Faded>
          <div className="absolute left-[13px] top-[29px] w-[336px] h-[6px] border-b-2 border-x-2 border-[#c9c9c9]" />
          <svg width="340" height="8" viewBox="0 0 340 8" className="absolute left-[13px] top-[29px]"><path d="M24 0v7M48 0v7M72 0v7M96 0v7M120 0v7M144 0v7M168 0v7M192 0v7M216 0v7M240 0v7M264 0v7M288 0v7M312 0v7" stroke="#c9c9c9" strokeWidth="1.500" /></svg>
          <svg width="14" height="33" viewBox="0 0 14 33" className="absolute left-[113px] top-[4px]"><polygon points="0,0 13,0 8,9 8,33 5,33 5,9" fill="#5a5a5a" /></svg>
        </div>
        <div className="flex-1" />
        <div className="mr-[14px]"><Gear c="#666" s={16} /></div>
      </div>
    </div>
  );
}
